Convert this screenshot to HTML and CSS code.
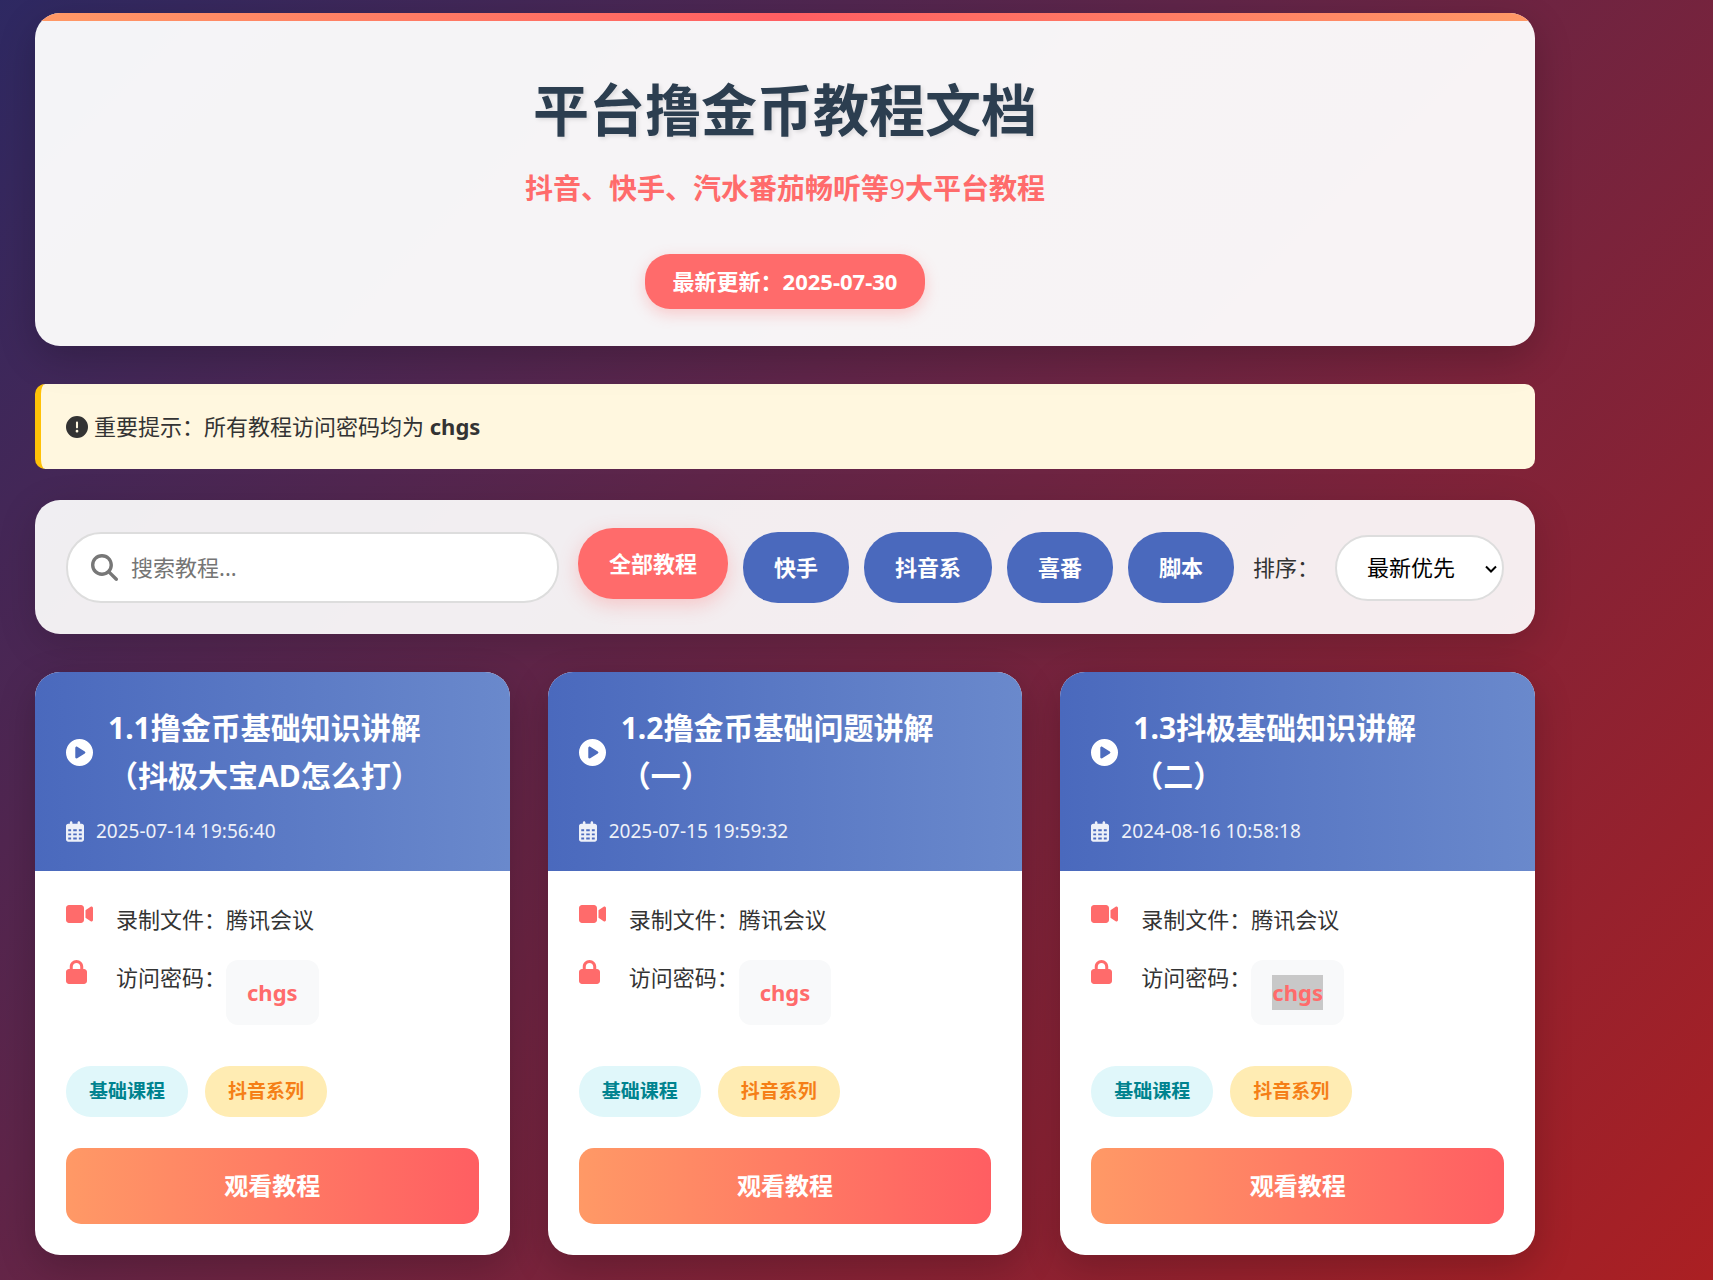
FILE: index.html
```html
<!DOCTYPE html>
<html lang="zh-CN">
<head>
<meta charset="UTF-8">
<meta name="viewport" content="width=device-width, initial-scale=1.0">
<title>平台撸金币教程文档</title>
<link rel="stylesheet" href="styles.css">
</head>
<body>
<svg class="sprite" aria-hidden="true">
  <symbol id="i-alert" viewBox="0 0 512 512"><path d="M256 512A256 256 0 1 0 256 0a256 256 0 1 0 0 512zm0-384c13.300 0 24 10.700 24 24V264c0 13.300-10.700 24-24 24s-24-10.700-24-24V152c0-13.300 10.700-24 24-24zM224 352a32 32 0 1 1 64 0 32 32 0 1 1 -64 0z"/></symbol>
  <symbol id="i-search" viewBox="0 0 512 512"><path d="M416 208c0 45.900-14.900 88.300-40 122.700L502.600 457.400c12.500 12.500 12.500 32.800 0 45.300s-32.800 12.500-45.300 0L330.700 376c-34.400 25.200-76.800 40-122.700 40C93.100 416 0 322.900 0 208S93.100 0 208 0S416 93.100 416 208zM208 352a144 144 0 1 0 0-288 144 144 0 1 0 0 288z"/></symbol>
  <symbol id="i-play" viewBox="0 0 512 512"><path d="M0 256a256 256 0 1 1 512 0A256 256 0 1 1 0 256zM188.300 147.100c-7.600 4.200-12.300 12.300-12.300 20.900V344c0 8.700 4.700 16.700 12.300 20.900s16.800 4.100 24.300-.5l144-88c7.100-4.400 11.500-12.100 11.500-20.500s-4.400-16.100-11.500-20.500l-144-88c-7.400-4.500-16.700-4.700-24.300-.5z"/></symbol>
  <symbol id="i-calendar" viewBox="0 0 448 512"><path fill-rule="evenodd" d="M128 0c17.700 0 32 14.300 32 32V64H288V32c0-17.700 14.300-32 32-32s32 14.300 32 32V64h40c30.900 0 56 25.100 56 56V456c0 30.900-25.100 56-56 56H56c-30.900 0-56-25.100-56-56V120C0 89.100 25.100 64 56 64H96V32c0-17.700 14.300-32 32-32zM56 200v48h72v-48zM180 200v48h88v-48zM320 200v48h72v-48zM56 304v48h72v-48zM180 304v48h88v-48zM320 304v48h72v-48zM56 408v48h72v-48zM180 408v48h88v-48zM320 408v48h72v-48z"/></symbol>
  <symbol id="i-video" viewBox="0 0 576 512" preserveAspectRatio="xMinYMid meet"><path d="M0 128C0 92.700 28.700 64 64 64H320c35.300 0 64 28.700 64 64V384c0 35.300-28.700 64-64 64H64c-35.300 0-64-28.700-64-64V128zM559.100 99.800c10.400 5.600 16.900 16.400 16.900 28.200V384c0 11.800-6.500 22.600-16.900 28.200s-23 5-32.900-1.600l-96-64L416 337.100V174.900l14.200-9.500 96-64c9.800-6.500 22.400-7.200 32.900-1.600z"/></symbol>
  <symbol id="i-lock" viewBox="0 0 448 512" preserveAspectRatio="xMinYMid meet"><path d="M144 144v48H304V144c0-44.200-35.800-80-80-80s-80 35.800-80 80zM80 192V144C80 64.500 144.500 0 224 0s144 64.500 144 144v48h16c35.300 0 64 28.700 64 64V448c0 35.300-28.700 64-64 64H64c-35.300 0-64-28.700-64-64V256c0-35.300 28.700-64 64-64H80z"/></symbol>
  <symbol id="i-chevron" viewBox="0 0 12 8"><path d="M1 1.500 6 6.500 11 1.500" fill="none" stroke="currentColor" stroke-width="2"/></symbol>
</svg>

<div class="container">
  <header class="hero">
    <h1>平台撸金币教程文档</h1>
    <p class="subtitle">抖音、快手、汽水番茄畅听等<span class="digit">9</span>大平台教程</p>
    <div class="updated">最新更新：2025-07-30</div>
  </header>

  <div class="notice">
    <svg class="notice-icon"><use href="#i-alert"/></svg>
    <p>重要提示：所有教程访问密码均为 <strong>chgs</strong></p>
  </div>

  <section class="controls">
    <label class="search">
      <svg class="search-icon"><use href="#i-search"/></svg>
      <input type="text" placeholder="搜索教程..." aria-label="搜索教程">
    </label>
    <div class="filters">
      <button type="button" class="filter active">全部教程</button>
      <button type="button" class="filter">快手</button>
      <button type="button" class="filter">抖音系</button>
      <button type="button" class="filter">喜番</button>
      <button type="button" class="filter">脚本</button>
    </div>
    <div class="sort">
      <label for="sort">排序：</label>
      <div class="select-wrap">
        <select id="sort"><option>最新优先</option><option>最早优先</option></select>
        <svg class="chevron"><use href="#i-chevron"/></svg>
      </div>
    </div>
  </section>

  <main class="grid">
    <article class="card">
      <div class="card-head">
        <h2><svg class="play-icon"><use href="#i-play"/></svg><span>1.1撸金币基础知识讲解（抖极大宝AD怎么打）</span></h2>
        <p class="date"><svg class="date-icon"><use href="#i-calendar"/></svg><time>2025-07-14 19:56:40</time></p>
      </div>
      <div class="card-body">
        <div class="info"><svg class="info-icon"><use href="#i-video"/></svg><span>录制文件：腾讯会议</span></div>
        <div class="info"><svg class="info-icon"><use href="#i-lock"/></svg><span>访问密码：</span><span class="password">chgs</span></div>
        <div class="tags"><span class="tag basic">基础课程</span><span class="tag series">抖音系列</span></div>
        <a class="watch" href="#">观看教程</a>
      </div>
    </article>

    <article class="card">
      <div class="card-head">
        <h2><svg class="play-icon"><use href="#i-play"/></svg><span>1.2撸金币基础问题讲解（一）</span></h2>
        <p class="date"><svg class="date-icon"><use href="#i-calendar"/></svg><time>2025-07-15 19:59:32</time></p>
      </div>
      <div class="card-body">
        <div class="info"><svg class="info-icon"><use href="#i-video"/></svg><span>录制文件：腾讯会议</span></div>
        <div class="info"><svg class="info-icon"><use href="#i-lock"/></svg><span>访问密码：</span><span class="password">chgs</span></div>
        <div class="tags"><span class="tag basic">基础课程</span><span class="tag series">抖音系列</span></div>
        <a class="watch" href="#">观看教程</a>
      </div>
    </article>

    <article class="card">
      <div class="card-head">
        <h2><svg class="play-icon"><use href="#i-play"/></svg><span>1.3抖极基础知识讲解（二）</span></h2>
        <p class="date"><svg class="date-icon"><use href="#i-calendar"/></svg><time>2024-08-16 10:58:18</time></p>
      </div>
      <div class="card-body">
        <div class="info"><svg class="info-icon"><use href="#i-video"/></svg><span>录制文件：腾讯会议</span></div>
        <div class="info"><svg class="info-icon"><use href="#i-lock"/></svg><span>访问密码：</span><span class="password"><span class="selected">chgs</span></span></div>
        <div class="tags"><span class="tag basic">基础课程</span><span class="tag series">抖音系列</span></div>
        <a class="watch" href="#">观看教程</a>
      </div>
    </article>
  </main>
</div>
</body>
</html>
```

FILE: styles.css
```css
* {
  box-sizing: border-box;
  margin: 0;
  padding: 0;
}

body {
  min-height: 100vh;
  font-family: "Noto Sans", "Noto Sans CJK SC", sans-serif;
  font-size: 22px;
  line-height: 35px;
  color: #333;
  background: linear-gradient(135deg, #1a2a6c -16%, #b21f1f 106%);
  text-spacing-trim: space-all;
}

svg {
  display: block;
  flex: none;
  fill: currentColor;
}

.sprite {
  display: none;
}

.container {
  padding: 13px 178px 25px 35px;
}

/* Header: sits above the notice so that its shadow falls on it */
.hero {
  position: relative;
  display: flex;
  flex-direction: column;
  align-items: center;
  margin-bottom: 38px;
  padding: 0 31px 37px;
  border-radius: 25px;
  overflow: hidden;
  background: rgba(255, 255, 255, 0.95);
  box-shadow: 0 12px 38px rgba(0, 0, 0, 0.2);
}

.hero::before {
  content: "";
  align-self: stretch;
  height: 8px;
  margin: 0 -31px 43px;
  background: linear-gradient(90deg, #ff9966, #ff5e62, #ff9966);
}

h1 {
  margin-bottom: 12px;
  font-size: 56px;
  line-height: 90px;
  color: #2c3e50;
  text-shadow: 2px 2px 4px rgba(0, 0, 0, 0.1);
}

.subtitle {
  margin-bottom: 43px;
  font-size: 28px;
  font-weight: 700;
  line-height: 45px;
  color: #ff6b6b;
}

.digit {
  font-weight: 400;
}

.updated {
  padding: 10px 28px;
  border-radius: 25px;
  font-weight: 700;
  color: #fff;
  background: #ff6b6b;
  box-shadow: 0 5px 15px rgba(255, 107, 107, 0.3);
}

/* Notice */
.notice {
  display: flex;
  align-items: center;
  gap: 6px;
  margin-bottom: 31px;
  padding: 25px;
  border-left: 6px solid #ffc107;
  border-radius: 10px;
  background: #fff7df;
}

.notice-icon {
  width: 22px;
  height: 22px;
}

/* Search and filters */
.controls {
  display: flex;
  align-items: center;
  gap: 19px;
  margin-bottom: 38px;
  padding: 32px 31px 31px;
  border-radius: 25px;
  background: rgba(255, 255, 255, 0.92);
  box-shadow: 0 10px 38px rgba(0, 0, 0, 0.15);
}

.search {
  display: flex;
  flex: 1;
  align-items: center;
  gap: 13px;
  min-width: 0;
  height: 71px;
  padding: 0 23px;
  border: 2px solid #ddd;
  border-radius: 35px;
  background: #fff;
}

.search-icon {
  width: 27px;
  height: 27px;
  color: #777;
}

.search input {
  flex: 1;
  min-width: 0;
  border: 0;
  outline: 0;
  font: inherit;
  background: none;
}

.search input::placeholder {
  color: #757575;
}

.filters {
  display: flex;
  gap: 15px;
}

.filter {
  padding: 18px 31px;
  border: 0;
  border-radius: 35px;
  font: inherit;
  font-weight: 700;
  color: #fff;
  background: #4a69bd;
}

.filter.active {
  background: #ff6b6b;
  box-shadow: 0 6px 19px rgba(255, 107, 107, 0.3);
  transform: translateY(-4px);
}

.sort {
  display: flex;
  align-items: center;
  gap: 16px;
}

.select-wrap {
  position: relative;
}

.sort select {
  display: block;
  width: 169px;
  height: 66px;
  padding: 0 0 0 30px;
  border: 2px solid #ddd;
  border-radius: 33px;
  appearance: none;
  font: inherit;
  color: #000;
  background: #fff;
}

.chevron {
  position: absolute;
  top: 30px;
  right: 7px;
  width: 12px;
  height: 8px;
  color: #000;
  pointer-events: none;
}

/* Cards */
.grid {
  display: grid;
  grid-template-columns: repeat(3, 1fr);
  gap: 38px;
}

.card {
  border-radius: 25px;
  overflow: hidden;
  background: #fff;
  box-shadow: 0 12px 38px rgba(0, 0, 0, 0.2);
}

.card-head {
  padding: 32px 31px 24px;
  color: #fff;
  background: linear-gradient(90deg, #4a69bd, #6a89cc);
}

.card h2 {
  display: flex;
  align-items: center;
  gap: 15px;
  margin-bottom: 15px;
  font-size: 30px;
  line-height: 48px;
}

.play-icon {
  width: 27px;
  height: 27px;
}

.date {
  display: flex;
  align-items: center;
  gap: 12px;
  font-size: 19px;
  line-height: 32px;
  opacity: 0.9;
}

.date-icon {
  width: 18px;
  height: 21px;
}

.card-body {
  padding: 31px;
}

.info {
  display: flex;
  align-items: flex-start;
  margin-bottom: 23px;
}

.info-icon {
  width: 27px;
  height: 24px;
  margin-right: 23px;
  color: #ff6b6b;
}

.password {
  padding: 15px 21px;
  border-radius: 12px;
  font-weight: 700;
  color: #ff6b6b;
  background: #f8f9fa;
}

.selected {
  display: block;
  background: #c8c8c8;
}

.tags {
  display: flex;
  gap: 17px;
  margin: 41px 0 31px;
}

.tag {
  padding: 10px 23px;
  border-radius: 25px;
  font-size: 19px;
  font-weight: 700;
  line-height: 31px;
}

.basic {
  color: #00838f;
  background: #e0f7fa;
}

.series {
  color: #f57f17;
  background: #ffecb3;
}

.watch {
  display: block;
  padding: 19px;
  border-radius: 15px;
  font-size: 24px;
  font-weight: 700;
  line-height: 38px;
  text-align: center;
  text-decoration: none;
  color: #fff;
  background: linear-gradient(90deg, #ff9966, #ff5e62);
}
```
